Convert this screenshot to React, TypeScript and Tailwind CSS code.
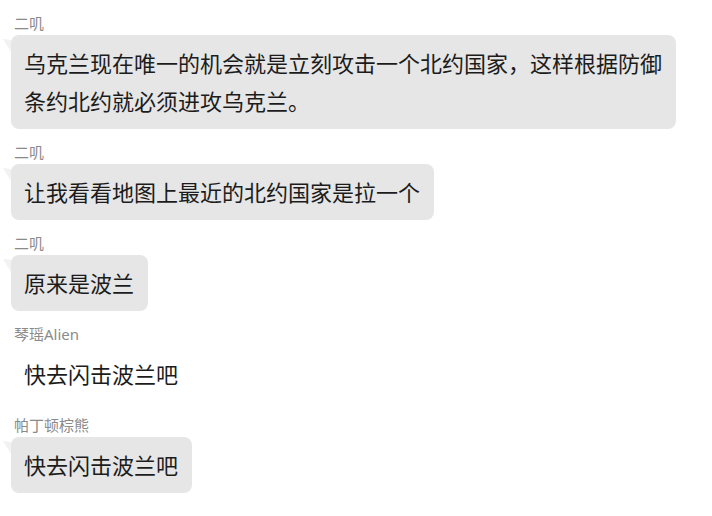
import React from "react";

type Msg = { name: string; text: string; bubble: boolean };

const msgs: Msg[] = [
  {
    name: "二叽",
    text: "乌克兰现在唯一的机会就是立刻攻击一个北约国家，这样根据防御条约北约就必须进攻乌克兰。",
    bubble: true,
  },
  { name: "二叽", text: "让我看看地图上最近的北约国家是拉一个", bubble: true },
  { name: "二叽", text: "原来是波兰", bubble: true },
  { name: "琴瑶Alien", text: "快去闪击波兰吧", bubble: false },
  { name: "帕丁顿棕熊", text: "快去闪击波兰吧", bubble: true },
];

export default function App() {
  return (
    <div
      className="w-[712px] h-[516px] bg-white overflow-hidden pl-[11px] pt-[13px] flex flex-col gap-[13px]"
      style={{ fontFamily: '"Noto Sans", "Noto Sans CJK SC", sans-serif' }}
    >
      {msgs.map((m, i) => (
        <div key={i} className="flex flex-col items-start">
          <div className="pl-[3px] text-[15px] leading-[20px] text-[#8a8a8a] mb-[2px]">
            {m.name}
          </div>
          <div className="relative">
            {m.bubble && (
              <svg
                className="absolute left-[-8px] top-[4px]"
                width="8"
                height="13"
                viewBox="0 0 8 13"
              >
                <polygon points="0,0 8,1 8,13" fill="#f2f2f2" />
              </svg>
            )}
            <div
              className={
                "max-w-[665px] pl-[13px] pr-[14px] py-[9px] text-[22px] leading-[38px] text-[#1c1c1c] rounded-[8px] " +
                (m.bubble ? "bg-[#e6e6e6]" : "bg-white")
              }
            >
              {m.text}
            </div>
          </div>
        </div>
      ))}
    </div>
  );
}
